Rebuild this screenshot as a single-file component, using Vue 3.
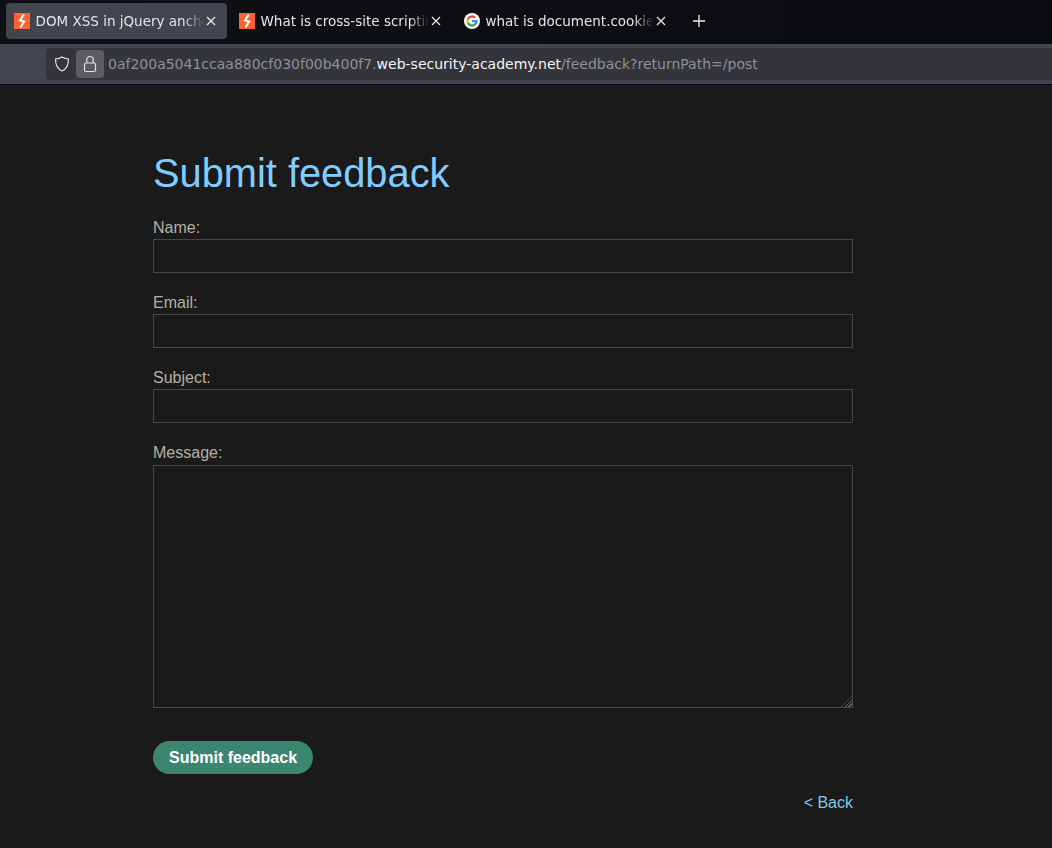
<template>
  <div class="browser">
    <div class="tabstrip">
      <div
        v-for="tab in tabs"
        :key="tab.title"
        class="tab"
        :class="{ active: tab.active }"
      >
        <svg v-if="tab.icon === 'academy'" class="favicon" viewBox="0 0 16 16">
          <rect width="16" height="16" fill="#fb6331" />
          <path d="M9.8 1.5 L6 7.4 L10.2 8.6 L6.4 14.5" fill="none" stroke="#fff" stroke-width="2" />
        </svg>
        <svg v-else class="favicon" viewBox="0 0 16 16">
          <circle cx="8" cy="8" r="8" fill="#fff" />
          <path d="M8 4.6 A3.4 3.4 0 0 1 10.3 5.5 L11.9 3.9 A5.7 5.7 0 0 0 2.9 5.4 L4.9 6.9 A3.4 3.4 0 0 1 8 4.6 Z" fill="#ea4335" />
          <path d="M4.9 6.9 L2.9 5.4 A5.7 5.7 0 0 0 2.9 10.6 L4.9 9.1 A3.4 3.4 0 0 1 4.9 6.9 Z" fill="#fbbc05" />
          <path d="M4.9 9.1 L2.9 10.6 A5.7 5.7 0 0 0 11.8 12.2 L10 10.7 A3.4 3.4 0 0 1 4.9 9.1 Z" fill="#34a853" />
          <path d="M13.6 7 H8 V9.3 H11.1 A2.7 2.7 0 0 1 10 10.7 L11.8 12.2 A5.7 5.7 0 0 0 13.6 7 Z" fill="#4285f4" />
        </svg>
        <span class="tab-title">{{ tab.title }}</span>
        <svg class="tab-close" viewBox="0 0 10 10">
          <path d="M1 1 L9 9 M9 1 L1 9" />
        </svg>
      </div>
      <svg class="new-tab" viewBox="0 0 12 12">
        <path d="M6 0 V12 M0 6 H12" />
      </svg>
    </div>

    <div class="navbar">
      <div class="urlbar">
        <svg class="shield" viewBox="0 0 16 16">
          <path d="M8 1 C10 2.3 12.2 2.9 14.5 3 C14.6 8.6 12.6 12.8 8 15 C3.4 12.8 1.4 8.6 1.5 3 C3.8 2.9 6 2.3 8 1 Z" />
        </svg>
        <div class="lock-btn">
          <svg class="lock" viewBox="0 0 14 18">
            <rect x="1.5" y="8" width="11" height="8.5" rx="1.5" />
            <path d="M3.8 8 V4.7 A3.2 3.2 0 0 1 10.2 4.7 V8" />
          </svg>
        </div>
        <div class="url">0af200a5041ccaa880cf030f00b400f7.<span class="host">web-security-academy.net</span>/feedback?returnPath=/post</div>
      </div>
    </div>

    <main class="page">
      <div class="container">
        <h1>Submit feedback</h1>
        <form @submit.prevent>
          <label for="name">Name:</label>
          <input id="name" type="text" />
          <label for="email">Email:</label>
          <input id="email" type="text" />
          <label for="subject">Subject:</label>
          <input id="subject" type="text" />
          <label for="message">Message:</label>
          <div class="textarea-wrap">
            <textarea id="message"></textarea>
            <span class="grip"></span>
          </div>
          <button type="submit">Submit feedback</button>
        </form>
        <div class="back-row">
          <a href="#" class="back">&lt; Back</a>
        </div>
      </div>
    </main>
  </div>
</template>

<script setup>
const tabs = [
  { title: 'DOM XSS in jQuery anchor href attribute sink', icon: 'academy', active: true },
  { title: 'What is cross-site scripting (XSS)', icon: 'academy', active: false },
  { title: 'what is document.cookie', icon: 'google', active: false }
]
</script>

<style>
html,
body {
  margin: 0;
  background: #1a1a1a;
}
</style>

<style scoped>
.browser {
  width: 1052px;
  height: 848px;
  overflow: hidden;
  display: flex;
  flex-direction: column;
  background: #1a1a1a;
}

.tabstrip {
  height: 44px;
  box-sizing: border-box;
  flex: none;
  display: flex;
  align-items: flex-start;
  padding: 3px 0 0 6px;
  background: linear-gradient(90deg, #0f1014, #0b0c11);
  font-family: "DejaVu Sans", sans-serif;
}

.tab {
  width: 221px;
  height: 36px;
  box-sizing: border-box;
  padding: 0 11px 0 8px;
  margin-right: 4px;
  display: flex;
  align-items: center;
  border-radius: 4px;
  color: #e4e5e6;
  font-size: 13.5px;
}

.tab.active {
  background: #42454d;
}

.favicon {
  width: 16px;
  height: 16px;
  flex: none;
  margin-right: 5.5px;
}

.tab-title {
  flex: 1;
  min-width: 0;
  overflow: hidden;
  white-space: nowrap;
  -webkit-mask-image: linear-gradient(90deg, #000 88%, transparent);
  mask-image: linear-gradient(90deg, #000 88%, transparent);
}

.tab-close {
  width: 10px;
  height: 10px;
  flex: none;
  margin-left: 2px;
  fill: none;
  stroke: #e6e6e6;
  stroke-width: 1.3;
}

.new-tab {
  width: 12px;
  height: 12px;
  margin: 12px 0 0 12px;
  fill: none;
  stroke: #eeeeee;
  stroke-width: 1.3;
}

.navbar {
  height: 41px;
  box-sizing: border-box;
  flex: none;
  padding: 4px 0 4px 46px;
  background: #42454d;
  border-bottom: 1px solid #0e0f12;
}

.urlbar {
  height: 32px;
  display: flex;
  align-items: center;
  padding-left: 8px;
  border-radius: 4px 0 0 4px;
  background: #33353b;
  font-family: "DejaVu Sans", sans-serif;
  font-size: 14px;
}

.shield {
  width: 16px;
  height: 16px;
  flex: none;
  fill: none;
  stroke: #e0e0e0;
  stroke-width: 1.2;
}

.lock-btn {
  width: 28px;
  height: 28px;
  flex: none;
  margin-left: 6px;
  display: flex;
  align-items: center;
  justify-content: center;
  border-radius: 4px;
  background: #5b5d63;
}

.lock {
  width: 14px;
  height: 18px;
  fill: none;
  stroke: #e0e0e0;
  stroke-width: 1.2;
}

.url {
  margin-left: 4px;
  color: #8f9094;
  white-space: nowrap;
}

.host {
  color: #f4f4f4;
}

.page {
  flex: 1;
  padding: 64px 0 0 153px;
  font-family: "Liberation Sans", Arial, sans-serif;
  font-size: 16px;
  color: #b5b0a4;
}

.container {
  width: 700px;
}

h1 {
  margin: 0 0 21px;
  font-size: 39.8px;
  line-height: 48px;
  font-weight: 400;
  color: #81ccff;
}

form {
  display: flex;
  flex-direction: column;
  align-items: flex-start;
}

label {
  display: block;
  height: 19px;
  line-height: 19px;
  margin-bottom: 2px;
}

input,
textarea {
  display: block;
  width: 700px;
  box-sizing: border-box;
  margin: 0;
  border: 1px solid #484848;
  background: #1a1a1a;
  color: #b5b0a4;
  outline: none;
}

input {
  height: 34px;
  margin-bottom: 20px;
}

.textarea-wrap {
  position: relative;
  margin: 1px 0 33px;
}

textarea {
  height: 243px;
  resize: none;
}

/* firefox-style resize handle */
.grip {
  position: absolute;
  right: 1px;
  bottom: 1px;
  width: 11px;
  height: 11px;
  background: repeating-linear-gradient(135deg, #1a1a1a 0 1.5px, #6b6b6b 1.5px 2.8px);
  clip-path: polygon(100% 0, 100% 100%, 0 100%);
}

button {
  height: 33px;
  padding: 1px 16px 0;
  border: none;
  border-radius: 17px;
  background: #3c8570;
  color: #fff;
  font-family: inherit;
  font-size: 16px;
  font-weight: 700;
}

.back-row {
  margin-top: 20px;
  text-align: right;
}

.back {
  color: #7fc8e8;
  text-decoration: none;
}
</style>
